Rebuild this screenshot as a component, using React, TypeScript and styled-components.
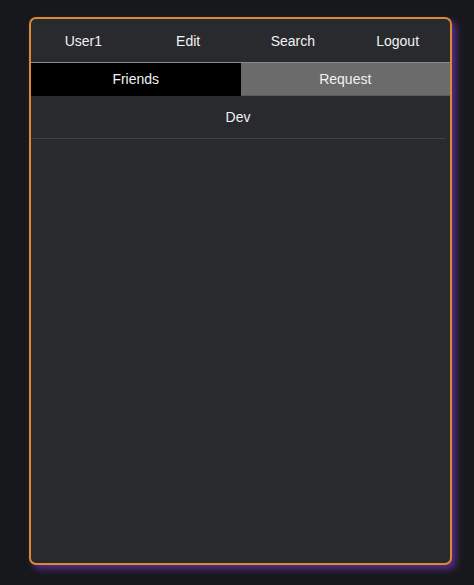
import styled, { createGlobalStyle } from "styled-components";
import { useState } from "react";

const Global = createGlobalStyle`
  html, body {
    margin: 0;
    background: #17181b;
    font-family: "Liberation Sans", Arial, sans-serif;
  }
`;

const Page = styled.div`
  padding: 17px 0 0 29px;
  height: 585px;
  box-sizing: border-box;
`;

const Card = styled.div`
  width: 423px;
  height: 548px;
  box-sizing: border-box;
  border: 2px solid #d98a33;
  border-radius: 7px;
  background: #282a2e;
  box-shadow: 4px 4px 7px #5a2c8c;
  overflow: hidden;
  display: flex;
  flex-direction: column;
`;

const Nav = styled.nav`
  display: grid;
  grid-template-columns: repeat(4, 1fr);
  height: 43px;
  border-bottom: 1px solid #8a8a8a;
`;

const NavItem = styled.a`
  display: flex;
  align-items: center;
  justify-content: center;
  color: #f2f2f2;
  font-size: 14px;
  cursor: pointer;
`;

const Tabs = styled.div`
  display: grid;
  grid-template-columns: 1fr 1fr;
  height: 33px;
`;

const Tab = styled.button<{ $active: boolean }>`
  border: none;
  margin: 0;
  padding: 0;
  font-family: inherit;
  font-size: 14px;
  color: #f2f2f2;
  background: ${({ $active }) => ($active ? "#000000" : "#6b6b6b")};
  border-bottom: 1px solid ${({ $active }) => ($active ? "#000000" : "#5a5a5a")};
  cursor: pointer;
`;

const List = styled.ul`
  list-style: none;
  margin: 0;
  padding: 0 5px 0 0;
`;

const Row = styled.li`
  height: 42px;
  display: flex;
  align-items: center;
  justify-content: center;
  color: #f2f2f2;
  font-size: 14px;
  border-bottom: 1px solid #414346;
`;

export default function App() {
  const [aba, setAba] = useState<"friends" | "request">("friends");
  const amigos = ["Dev"];

  return (
    <>
      <Global />
      <Page>
        <Card>
          <Nav>
            <NavItem>User1</NavItem>
            <NavItem>Edit</NavItem>
            <NavItem>Search</NavItem>
            <NavItem>Logout</NavItem>
          </Nav>
          <Tabs>
            <Tab $active={aba === "friends"} onClick={() => setAba("friends")}>Friends</Tab>
            <Tab $active={aba === "request"} onClick={() => setAba("request")}>Request</Tab>
          </Tabs>
          <List>
            {amigos.map((nome) => (
              <Row key={nome}>{nome}</Row>
            ))}
          </List>
        </Card>
      </Page>
    </>
  );
}
